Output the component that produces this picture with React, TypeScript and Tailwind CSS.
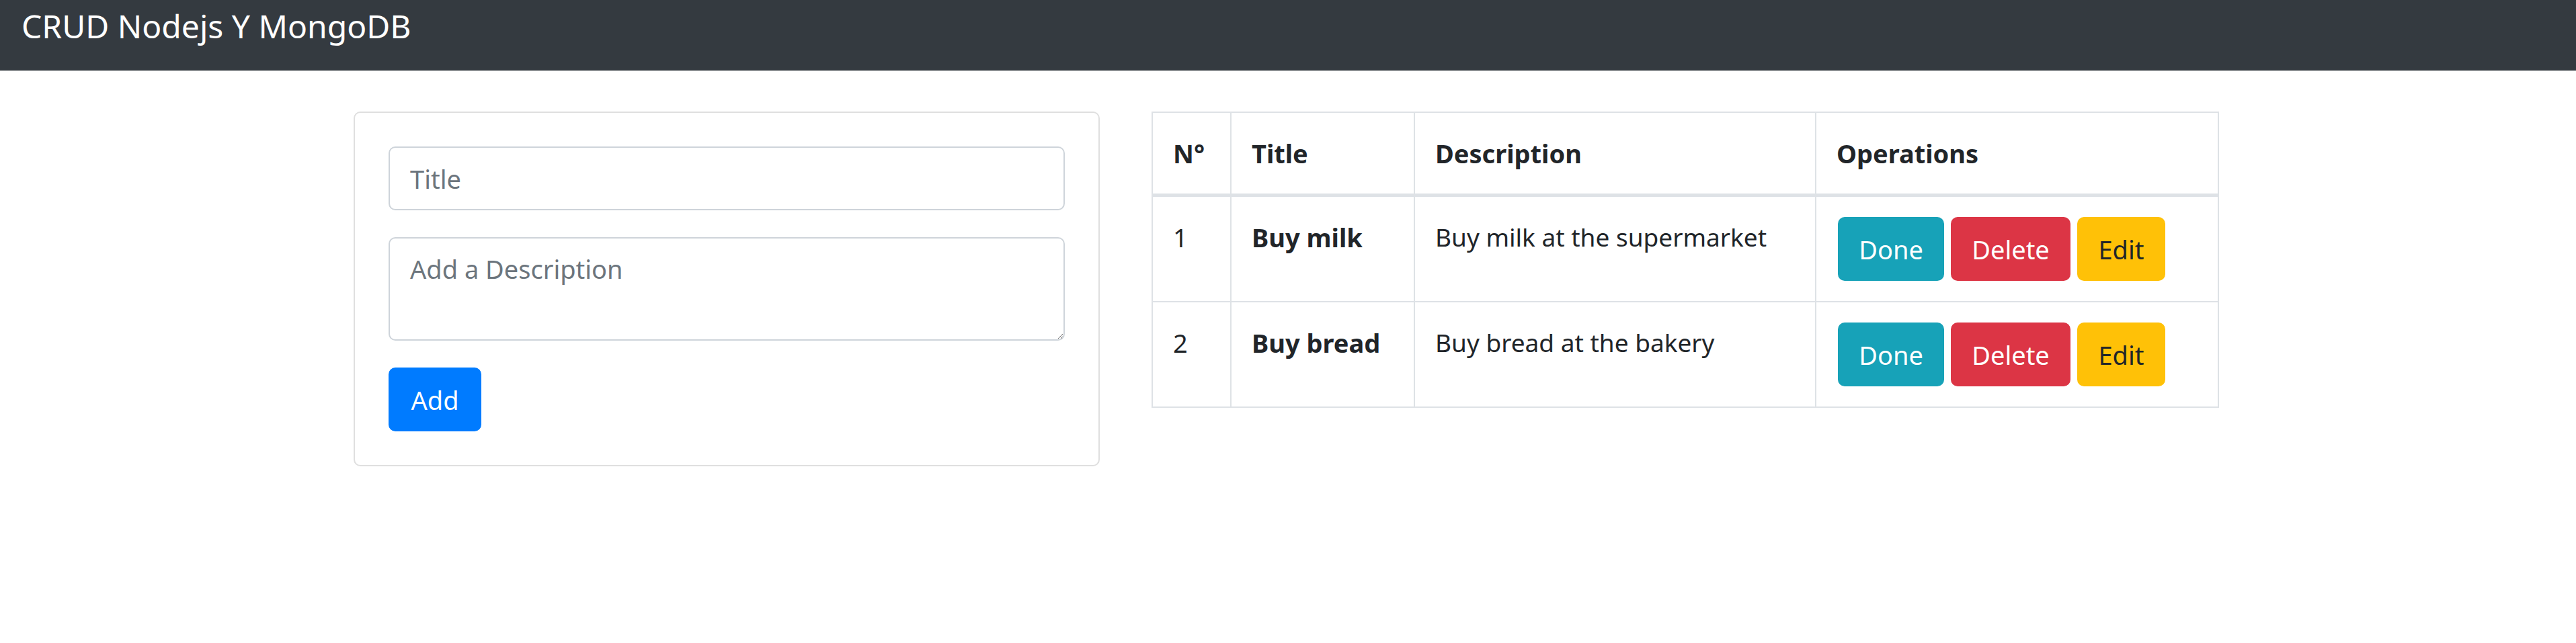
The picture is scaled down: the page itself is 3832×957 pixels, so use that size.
import React from "react";

type Task = { n: number; title: string; description: string };

const tasks: Task[] = [
  { n: 1, title: "Buy milk", description: "Buy milk at the supermarket" },
  { n: 2, title: "Buy bread", description: "Buy bread at the bakery" },
];

function TaskForm() {
  return (
    <div className="w-[1110px] shrink-0 rounded-[10px] border-2 border-[#dfdfdf] bg-white p-[50px]">
      <form className="flex flex-col" onSubmit={(e) => e.preventDefault()}>
        <input
          type="text"
          placeholder="Title"
          className="box-border h-[95px] w-full rounded-[10px] border-2 border-[#ced4da] bg-white px-[30px] text-[38px] leading-[60px] text-[#495057] outline-none placeholder:text-[#6c757d]"
        />
        <textarea
          rows={2}
          placeholder="Add a Description"
          className="mt-[40px] box-border h-[154px] w-full resize-y rounded-[10px] border-2 border-[#ced4da] bg-white px-[30px] py-[15px] text-[38px] leading-[60px] text-[#495057] outline-none placeholder:text-[#6c757d]"
        />
        <button
          type="submit"
          className="mt-[40px] h-[95px] w-[138px] rounded-[10px] bg-[#007bff] text-[38px] leading-[60px] text-white"
        >
          Add
        </button>
      </form>
    </div>
  );
}

function TaskTable() {
  return (
    <table className="w-[1586px] shrink-0 table-fixed border-collapse border-2 border-[#dee2e6] text-left">
      <colgroup>
        <col className="w-[117px]" />
        <col className="w-[273px]" />
        <col className="w-[597px]" />
        <col className="w-[599px]" />
      </colgroup>
      <thead>
        <tr>
          <th className="border-2 border-b-[5px] border-[#dee2e6] p-[30px] align-bottom text-[38px] font-bold leading-[60px]">N°</th>
          <th className="border-2 border-b-[5px] border-[#dee2e6] p-[30px] align-bottom text-[38px] font-bold leading-[60px]">Title</th>
          <th className="border-2 border-b-[5px] border-[#dee2e6] p-[30px] align-bottom text-[38px] font-bold leading-[60px]">Description</th>
          <th className="border-2 border-b-[5px] border-[#dee2e6] p-[30px] align-bottom text-[38px] font-bold leading-[60px]">Operations</th>
        </tr>
      </thead>
      <tbody>
        {tasks.map((t) => (
          <tr key={t.n}>
            <td className="border-2 border-[#dee2e6] p-[30px] align-top text-[38px] leading-[60px]">{t.n}</td>
            <td className="whitespace-nowrap border-2 border-[#dee2e6] p-[30px] align-top text-[38px] font-bold leading-[60px]">{t.title}</td>
            <td className="border-2 border-[#dee2e6] p-[30px] align-top text-[37px] leading-[60px]">{t.description}</td>
            <td className="border-2 border-[#dee2e6] py-[30px] pl-[32px] pr-[30px] align-top">
              <div className="flex gap-[10px]">
                <button className="h-[95px] w-[158px] rounded-[10px] bg-[#17a2b8] text-[38px] leading-[60px] text-white">Done</button>
                <button className="h-[95px] w-[178px] rounded-[10px] bg-[#dc3545] text-[38px] leading-[60px] text-white">Delete</button>
                <button className="h-[95px] w-[131px] rounded-[10px] bg-[#ffc107] text-[38px] leading-[60px] text-[#212529]">Edit</button>
              </div>
            </td>
          </tr>
        ))}
      </tbody>
    </table>
  );
}

export default function App() {
  return (
    <div className="min-h-[957px] w-full bg-white font-['Noto_Sans',sans-serif] text-[#212529]">
      <nav className="h-[105px] bg-[#343a40] pl-[32px] pt-[1px]">
        <a href="#" className="text-[48px] leading-[75px] text-white">
          CRUD Nodejs Y MongoDB
        </a>
      </nav>
      <div className="mx-auto mt-[61px] flex w-[2780px] items-start gap-[77px]">
        <TaskForm />
        <TaskTable />
      </div>
    </div>
  );
}
